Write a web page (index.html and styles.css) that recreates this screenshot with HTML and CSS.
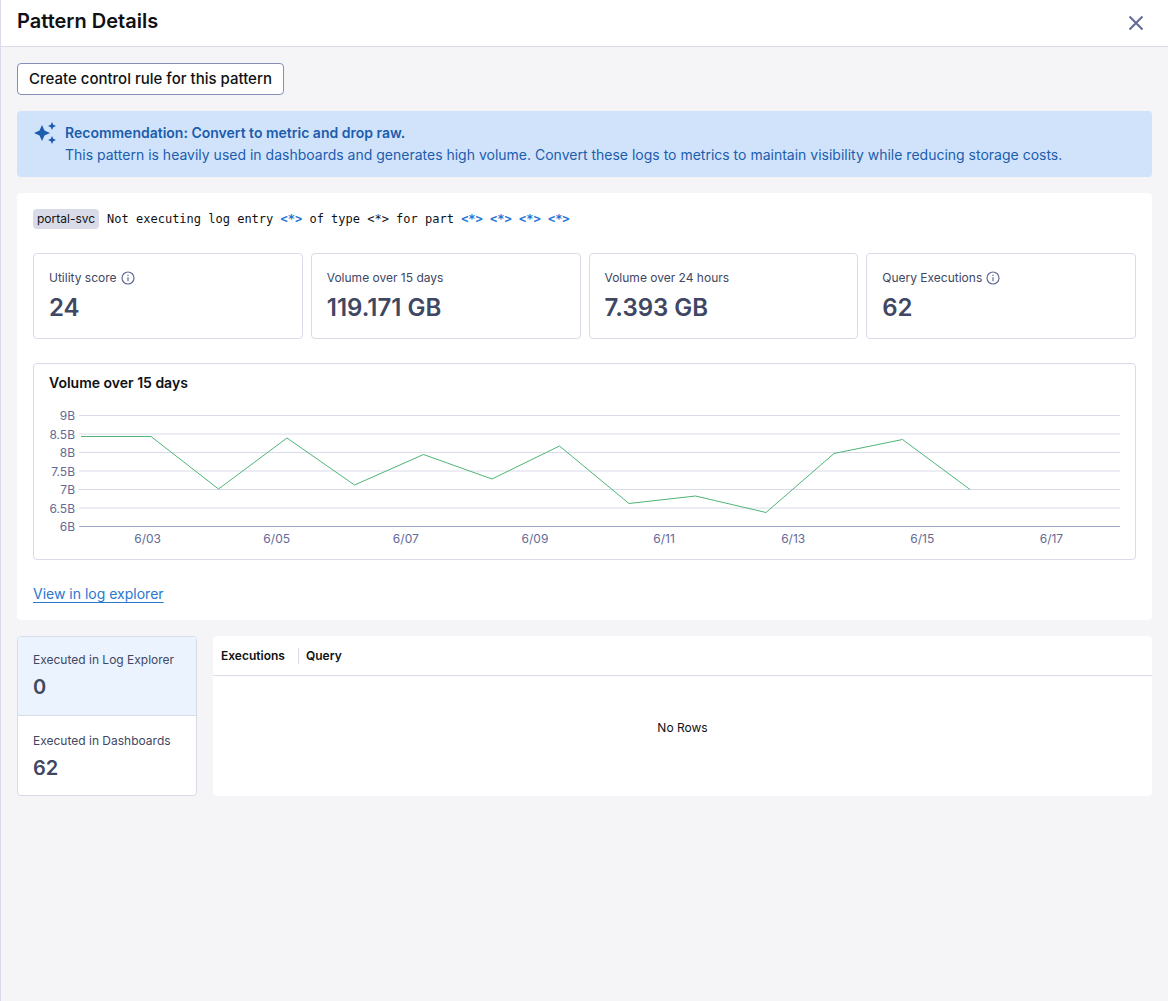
FILE: index.html
```html
<!DOCTYPE html>
<html lang="en">
<head>
<meta charset="utf-8">
<meta name="viewport" content="width=device-width, initial-scale=1">
<title>Pattern Details</title>
<link rel="stylesheet" href="styles.css">
</head>
<body>
<div class="drawer">
  <header class="drawer-header">
    <h1 class="drawer-title">Pattern Details</h1>
    <button class="close" type="button" aria-label="Close">
      <svg width="16" height="16" viewBox="0 0 16 16" aria-hidden="true"><path d="M1.5 1.5 14.5 14.5M14.5 1.5 1.5 14.5" fill="none" stroke="currentColor" stroke-width="2"/></svg>
    </button>
  </header>

  <main class="content">
    <button class="create-rule" type="button">Create control rule for this pattern</button>

    <section class="banner">
      <svg class="banner-icon" width="24" height="24" viewBox="0 0 24 24" fill="currentColor" aria-hidden="true">
        <path d="M9 3 11.500 8.500 17 11 11.500 13.500 9 19 6.500 13.500 1 11 6.500 8.500Z"/>
        <path d="M19 0 20.250 2.750 23 4 20.250 5.250 19 8 17.750 5.250 15 4 17.750 2.750Z"/>
        <path d="M19 14 20.250 16.750 23 18 20.250 19.250 19 22 17.750 19.250 15 18 17.750 16.750Z"/>
      </svg>
      <div>
        <h2 class="banner-title">Recommendation: Convert to metric and drop raw.</h2>
        <p class="banner-text">This pattern is heavily used in dashboards and generates high volume. Convert these logs to metrics to maintain visibility while reducing storage costs.</p>
      </div>
    </section>

    <section class="panel">
      <div class="pattern">
        <span class="tag">portal-svc</span>
        <code class="template">Not executing log entry <b>&lt;*&gt;</b> of type &lt;*&gt; for part <b>&lt;*&gt;</b> <b>&lt;*&gt;</b> <b>&lt;*&gt;</b> <b>&lt;*&gt;</b></code>
      </div>

      <div class="stats">
        <div class="stat">
          <div class="label">Utility score
            <svg class="info" width="14" height="14" viewBox="0 0 14 14" aria-hidden="true"><circle cx="7" cy="7" r="6" fill="none" stroke="currentColor" stroke-width="1.2"/><path d="M7 6.200V10.200M7 3.800V5" stroke="currentColor" stroke-width="1.200"/></svg>
          </div>
          <div class="value">24</div>
        </div>
        <div class="stat">
          <div class="label">Volume over 15 days</div>
          <div class="value">119.171 GB</div>
        </div>
        <div class="stat">
          <div class="label">Volume over 24 hours</div>
          <div class="value">7.393 GB</div>
        </div>
        <div class="stat">
          <div class="label">Query Executions
            <svg class="info" width="14" height="14" viewBox="0 0 14 14" aria-hidden="true"><circle cx="7" cy="7" r="6" fill="none" stroke="currentColor" stroke-width="1.2"/><path d="M7 6.200V10.200M7 3.800V5" stroke="currentColor" stroke-width="1.200"/></svg>
          </div>
          <div class="value">62</div>
        </div>
      </div>

      <section class="chart-card">
        <h3 class="chart-title">Volume over 15 days</h3>
        <div class="chart">
          <div class="y-axis"><span>9B</span><span>8.5B</span><span>8B</span><span>7.5B</span><span>7B</span><span>6.5B</span><span>6B</span></div>
          <div class="plot-area">
            <svg class="plot" viewBox="0 0 1041 112" preserveAspectRatio="none" role="img" aria-label="Daily volume">
              <path class="grid-line" d="M0 .5H1041M0 19H1041M0 37.5H1041M0 56H1041M0 74.5H1041M0 93H1041"/>
              <path class="base-line" d="M0 111.500H1041"/>
              <polyline class="series" points="2,21.5 72,21.5 139.5,74 208,23 275.5,70 344.5,39.5 413,64 480.5,31 550,88.5 616.5,81 687,97.5 755,38.5 823.5,24.5 891,74.5"/>
            </svg>
            <div class="x-axis"><span>6/03</span><span>6/05</span><span>6/07</span><span>6/09</span><span>6/11</span><span>6/13</span><span>6/15</span><span>6/17</span></div>
          </div>
        </div>
      </section>

      <a class="explore" href="#log-explorer">View in log explorer</a>
    </section>

    <div class="executions">
      <div class="sources">
        <button class="source selected" type="button" aria-pressed="true">
          <span class="label">Executed in Log Explorer</span>
          <span class="count">0</span>
        </button>
        <button class="source" type="button" aria-pressed="false">
          <span class="label">Executed in Dashboards</span>
          <span class="count">62</span>
        </button>
      </div>
      <div class="table-panel">
        <table class="queries">
          <thead>
            <tr><th class="col-executions" scope="col"><span>Executions</span></th><th scope="col">Query</th></tr>
          </thead>
          <tbody>
            <tr><td class="empty" colspan="2">No Rows</td></tr>
          </tbody>
        </table>
      </div>
    </div>
  </main>
</div>
</body>
</html>
```
FILE: styles.css
```css
* {
  box-sizing: border-box;
}

body {
  margin: 0;
  background: #f5f5f8;
  color: #0f1114;
  font: 14px/20px Inter, "Liberation Sans", sans-serif;
}

h1, h2, h3, p {
  margin: 0;
}

button {
  font: inherit;
  cursor: pointer;
}

.drawer {
  min-height: 100vh;
  border-left: 1px solid #dadbe9;
}

.drawer-header {
  display: flex;
  align-items: center;
  justify-content: space-between;
  padding: 7px 24px 11px 16px;
  background: #fff;
  border-bottom: 1px solid #dadbe9;
}

.drawer-title {
  font-size: 20px;
  line-height: 28px;
  font-weight: 600;
}

.close {
  display: flex;
  padding: 0;
  margin-top: 4px;
  border: 0;
  background: none;
  color: #626a96;
}

.content {
  display: flex;
  flex-direction: column;
  gap: 16px;
  padding: 16px;
}

.create-rule {
  align-self: flex-start;
  padding: 5px 11px;
  border: 1px solid #868db8;
  border-radius: 4px;
  background: #fff;
  color: #0f1114;
  font-size: 15px;
  font-weight: 500;
}

.banner {
  display: flex;
  gap: 8px;
  padding: 11px 16px;
  border-radius: 4px;
  background: #d1e3fa;
  color: #1c5dae;
}

.banner-icon {
  flex: none;
}

.banner-title {
  font-size: 14px;
  line-height: 22px;
  font-weight: 600;
}

.banner-text {
  line-height: 22px;
}

.panel {
  display: flex;
  flex-direction: column;
  gap: 24px;
  padding: 16px;
  border-radius: 4px;
  background: #fff;
}

.pattern {
  display: flex;
  align-items: center;
  gap: 8px;
}

.tag {
  padding: 0 4px;
  border-radius: 4px;
  background: #dadbe9;
  font-size: 12px;
}

.template {
  font: 12px/20px "DejaVu Sans Mono", monospace;
}

.template b {
  color: #2274d8;
}

.stats {
  display: grid;
  grid-template-columns: repeat(4, 1fr);
  gap: 8px;
}

.stat {
  padding: 15px 15px 14px;
  border: 1px solid #dadbe9;
  border-radius: 4px;
}

.label {
  display: flex;
  align-items: center;
  gap: 4px;
  color: #404763;
  font-size: 12px;
  line-height: 18px;
}

.info {
  color: #626a96;
}

.value {
  margin-top: 5px;
  color: #404763;
  font-size: 24px;
  line-height: 32px;
  font-weight: 600;
}

.chart-card {
  padding: 8px 15px 12px;
  border: 1px solid #dadbe9;
  border-radius: 4px;
}

.chart-title {
  font-size: 14px;
  line-height: 22px;
  font-weight: 600;
}

.chart {
  display: flex;
  gap: 4px;
  margin-top: 13px;
  color: #626a96;
  font-size: 12px;
}

.y-axis {
  display: flex;
  flex-direction: column;
  justify-content: space-between;
  width: 26px;
  height: 129px;
  line-height: 18px;
  text-align: right;
}

.plot-area {
  flex: 1;
  min-width: 0;
  padding-top: 8px;
}

.plot {
  display: block;
  width: 100%;
  height: 112px;
}

.grid-line,
.base-line,
.series {
  fill: none;
  stroke-width: 1px;
  vector-effect: non-scaling-stroke;
}

.grid-line {
  stroke: #dadbe9;
}

.base-line {
  stroke: #a2a7c9;
}

.series {
  stroke: #4fb477;
}

.x-axis {
  display: grid;
  grid-template-columns: repeat(8, 1fr);
  padding: 4px 4px 0;
  line-height: 16px;
  text-align: center;
}

.explore {
  align-self: flex-start;
  color: #2878d0;
  text-decoration: underline 1px;
  text-underline-offset: 3px;
  text-decoration-skip-ink: none;
}

.executions {
  display: flex;
  gap: 16px;
}

.sources {
  display: flex;
  flex-direction: column;
  flex: none;
  width: 180px;
  overflow: hidden;
  border: 1px solid #dadbe9;
  border-radius: 4px;
  background: #fff;
}

.source {
  display: flex;
  flex-direction: column;
  gap: 4px;
  padding: 14px 15px;
  border: 0;
  background: none;
  text-align: left;
}

.source + .source {
  padding: 16px 15px 13px;
  border-top: 1px solid #dadbe9;
}

.source.selected {
  background: #ebf3ff;
}

.count {
  color: #404763;
  font-size: 20px;
  line-height: 28px;
  font-weight: 600;
}

.table-panel {
  flex: 1;
  min-height: 160px;
  border-radius: 4px;
  background: #fff;
}

.queries {
  width: 100%;
  border-spacing: 0;
  table-layout: fixed;
  font-size: 12px;
}

.queries th {
  height: 40px;
  padding: 0 8px;
  border-bottom: 1px solid #dadbe9;
  font-weight: 600;
  line-height: 16px;
  text-align: left;
}

.queries .col-executions {
  width: 86px;
  padding-right: 0;
}

.queries .col-executions + th {
  padding-left: 7px;
}

.col-executions span {
  display: block;
  border-right: 1px solid #dadbe9;
}

.queries .empty {
  height: 104px;
  padding: 0;
  text-align: center;
}
```
